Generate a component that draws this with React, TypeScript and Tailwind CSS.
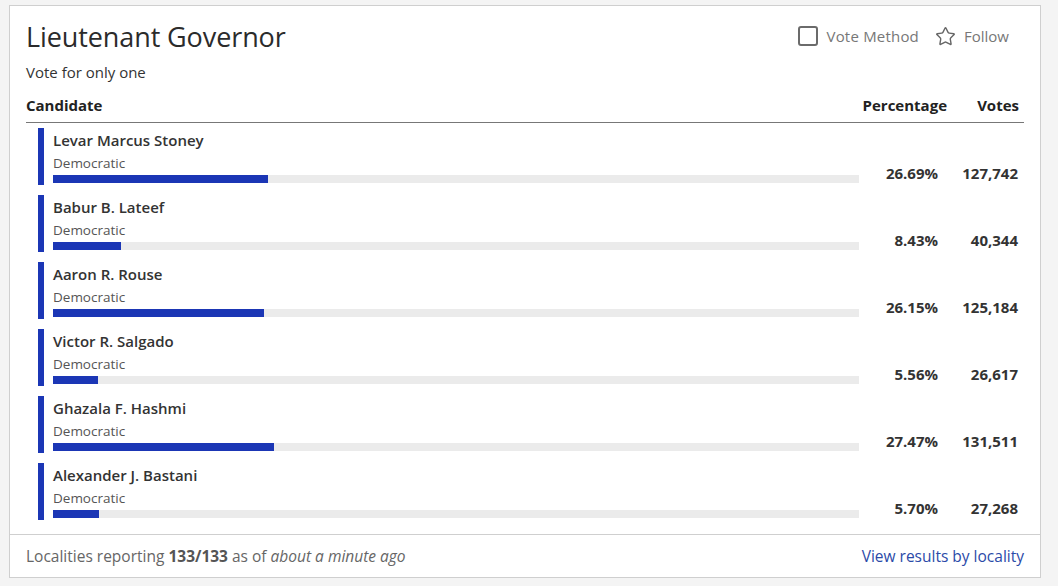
import { Star } from "lucide-react";

const CANDIDATES = [
  { name: "Levar Marcus Stoney", party: "Democratic", pct: 26.69, votes: "127,742" },
  { name: "Babur B. Lateef", party: "Democratic", pct: 8.43, votes: "40,344" },
  { name: "Aaron R. Rouse", party: "Democratic", pct: 26.15, votes: "125,184" },
  { name: "Victor R. Salgado", party: "Democratic", pct: 5.56, votes: "26,617" },
  { name: "Ghazala F. Hashmi", party: "Democratic", pct: 27.47, votes: "131,511" },
  { name: "Alexander J. Bastani", party: "Democratic", pct: 5.7, votes: "27,268" },
];

export default function App() {
  return (
    <div
      className="w-[1058px] h-[586px] bg-[#f4f4f4] pt-[5px] pl-[9px]"
      style={{ fontFamily: '"Open Sans", "Noto Sans", sans-serif' }}
    >
      <div className="w-[1032px] h-[573px] bg-white border border-[#cfcfcf] flex flex-col">
        <div className="px-[16px] pt-[13px] flex-1">
          {/* title + actions */}
          <div className="flex items-start justify-between">
            <div>
              <h1 className="text-[27px] leading-[36px] font-medium text-[#2b2b2b] tracking-[-0.1px]">
                Lieutenant Governor
              </h1>
              <div className="mt-[7px] text-[15px] leading-[20px] text-[#333]">Vote for only one</div>
            </div>
            <div className="flex items-center mt-[6px] mr-[15px] text-[15px] text-[#777]">
              <span className="w-[20px] h-[20px] border-2 border-[#6b6b6b] rounded-[3px] mr-[9px]" />
              <span className="tracking-[0.2px]">Vote Method</span>
              <Star className="ml-[16px] mr-[8px] text-[#666]" size={21} strokeWidth={1.6} />
              <span>Follow</span>
            </div>
          </div>

          {/* column headers */}
          <div className="mt-[13px] flex items-center border-b border-[#777] pb-[7px] text-[15px] leading-[20px] font-bold text-[#222]">
            <div className="flex-1">Candidate</div>
            <div className="w-[104px] text-right">Percentage</div>
            <div className="w-[77px] text-right pr-[5px]">Votes</div>
          </div>

          {/* candidate rows */}
          <div className="mt-[5px] flex flex-col gap-[10px]">
            {CANDIDATES.map((c) => (
              <div key={c.name} className="flex h-[57px]">
                <div className="flex-1 ml-[12px] border-l-[6px] border-[#1b36b5] pl-[9px] pt-[2px] flex flex-col">
                  <div className="text-[15px] leading-[20px] font-semibold text-[#333]">{c.name}</div>
                  <div className="mt-[3px] text-[13.5px] leading-[20px] text-[#555]">{c.party}</div>
                  <div className="mt-[2px] h-[8px] bg-[#ebebeb]">
                    <div className="h-full bg-[#1b36b5]" style={{ width: `${c.pct}%` }} />
                  </div>
                </div>
                <div className="w-[79px] flex items-end justify-end pb-[2px] text-[15px] leading-[20px] font-bold text-[#333]">
                  {c.pct.toFixed(2)}%
                </div>
                <div className="w-[86px] flex items-end justify-end pb-[2px] pr-[6px] text-[15px] leading-[20px] font-bold text-[#333]">
                  {c.votes}
                </div>
              </div>
            ))}
          </div>
        </div>

        <div className="border-t border-[#cfcfcf] h-[43px] px-[16px] flex items-center justify-between text-[15.5px] leading-[20px] text-[#666]">
          <div>
            Localities reporting <span className="font-bold text-[#555]">133/133</span> as of{" "}
            <i>about a minute ago</i>
          </div>
          <a className="text-[#2b4aa8]">View results by locality</a>
        </div>
      </div>
    </div>
  );
}
